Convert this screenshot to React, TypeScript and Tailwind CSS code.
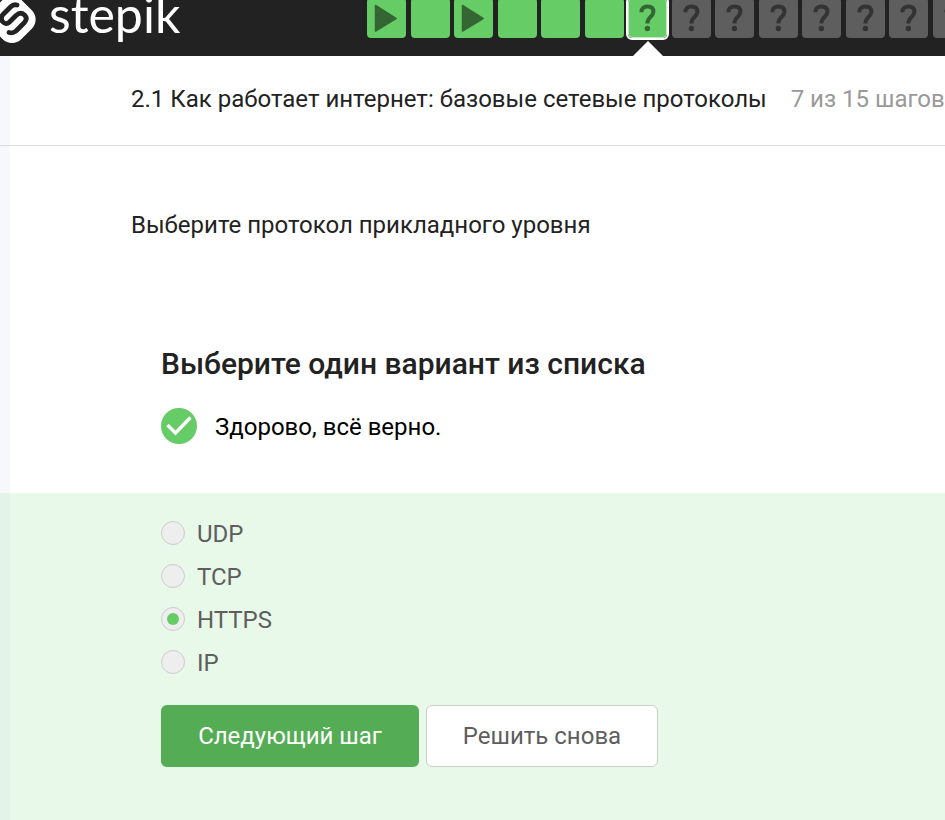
import { useState } from "react";
import type { ReactNode } from "react";

type StepKind = "video" | "text" | "quiz";
type Step = { kind: StepKind; passed: boolean; current?: boolean };

const steps: Step[] = [
  { kind: "video", passed: true },
  { kind: "text", passed: true },
  { kind: "video", passed: true },
  { kind: "text", passed: true },
  { kind: "text", passed: true },
  { kind: "text", passed: true },
  { kind: "quiz", passed: true, current: true },
  ...Array.from({ length: 8 }, (): Step => ({ kind: "quiz", passed: false })),
];

const options = ["UDP", "TCP", "HTTPS", "IP"];

function LogoMark() {
  return (
    <svg width="37" height="44" viewBox="0 0 37 44" className="shrink-0" aria-hidden="true">
      <rect x="-8.5" y="-1" width="41" height="41" rx="13" transform="rotate(45 12 19.5)" fill="#fff" />
      <path
        d="M17 5 Q13.5 4 11 6.5 L3 14.5 Q0 18 2.5 21.5 Q6 25.5 9.5 22 L16 15.5 Q20.5 11.5 24.5 15 Q28 18.5 24.5 22.5 L16 31 Q13 33.5 9 32.5"
        fill="none"
        stroke="#222"
        strokeWidth="4.8"
        strokeLinecap="round"
        strokeLinejoin="round"
      />
    </svg>
  );
}

function StepTile({ step, index }: { step: Step; index: number }) {
  let icon: ReactNode = null;
  if (step.kind === "video") {
    icon = (
      <svg width="24" height="28" viewBox="0 0 24 28" aria-hidden="true">
        <path d="M1.5 1.5 L22 14.5 L1.5 27 Z" fill="#336633" stroke="#336633" strokeWidth="1.5" strokeLinejoin="round" />
      </svg>
    );
  } else if (step.kind === "quiz") {
    icon = (
      <svg width="18" height="28" viewBox="0 0 18 28" aria-hidden="true">
        <path
          d="M3.3 8.2 C3.3 4.5 5.8 2.4 9.4 2.4 C13.2 2.4 15.4 4.4 15.4 7.8 C15.4 10.6 13.8 11.8 12.1 13.4 C10 15.4 9.4 16.4 9.4 19.6"
          fill="none"
          stroke={step.passed ? "#336633" : "#333"}
          strokeWidth="4"
        />
        <circle cx="9.4" cy="24.5" r="2.7" fill={step.passed ? "#336633" : "#333"} />
      </svg>
    );
  }
  return (
    <li className="relative shrink-0 odd:mr-[5px] even:mr-1">
      <a
        href={`#step-${index + 1}`}
        aria-label={`Шаг ${index + 1}`}
        aria-current={step.current ? "step" : undefined}
        className={`flex h-10 w-[39px] items-center justify-center rounded pr-0.5 ${
          step.passed ? "bg-[#66cc66]" : "bg-[#5e5e5e]"
        } ${step.current ? "border border-[#c2ebc2] outline-2 outline-white" : ""}`}
      >
        {icon}
      </a>
      {step.current && (
        <svg width="30" height="15" viewBox="0 0 30 15" className="absolute top-[43px] left-[5px]" aria-hidden="true">
          <path d="M0 15 L15 0 L30 15 Z" fill="#fff" />
        </svg>
      )}
    </li>
  );
}

export default function App() {
  const [answer, setAnswer] = useState("HTTPS");

  return (
    <div className="flex min-h-screen flex-col overflow-x-hidden bg-white font-['Roboto','Noto_Sans',sans-serif] text-2xl text-[#222]">
      <header className="flex h-14 items-start bg-[#222]">
        <a href="#home" className="flex w-[367px] shrink-0 items-start text-white">
          <LogoMark />
          <span className="ml-3 -mt-3 font-['Lato',sans-serif] text-[50px] leading-[52px]">stepik</span>
        </a>
        <nav aria-label="Шаги урока" className="-mt-0.5 min-w-0 flex-1">
          <ol className="flex">
            {steps.map((step, i) => (
              <StepTile key={i} step={step} index={i} />
            ))}
          </ol>
        </nav>
      </header>

      <div className="grid flex-1 grid-cols-1">
        <main className="col-start-1 row-start-1 flex min-w-0 flex-col">
          <div className="flex h-[90px] items-center gap-6 border-b border-[#ddd] pb-1 pl-[131px] whitespace-nowrap">
            <h1>2.1 Как работает интернет: базовые сетевые протоколы</h1>
            <span className="text-[#999]">7 из 15 шагов</span>
          </div>

          <p className="mt-[61px] pl-[131px] leading-9">Выберите протокол прикладного уровня</p>

          <form className="mt-[99px] flex flex-1 flex-col" onSubmit={(e) => e.preventDefault()}>
            <div className="pb-[49px] pl-[161px]">
              <h2 id="question" className="text-[30px] leading-11 font-medium">
                Выберите один вариант из списка
              </h2>
              <div className="mt-[22px] flex items-center gap-[18px] text-black">
                <svg width="36" height="36" viewBox="0 0 36 36" aria-hidden="true">
                  <circle cx="18" cy="18" r="18" fill="#66cc66" />
                  <path d="M6.5 17 L14.5 25 L29.5 9.5" fill="none" stroke="#fff" strokeWidth="3.4" />
                </svg>
                <p role="status" className="pt-0.5">
                  Здорово, всё верно.
                </p>
              </div>
            </div>

            <div className="flex-1 bg-[#e8f8e9] pt-[18px] pb-[53px] pl-[161px]">
              <div role="radiogroup" aria-labelledby="question" className="flex flex-col items-start text-[#5e5e5e]">
                {options.map((option) => (
                  <label key={option} className="flex h-[43px] items-center gap-3">
                    <input
                      type="radio"
                      name="answer"
                      value={option}
                      checked={answer === option}
                      onChange={() => setAnswer(option)}
                      className="grid size-6 appearance-none place-items-center rounded-full border border-[#ccc] bg-[#eee] before:size-3 before:rounded-full checked:before:bg-[#66cc66]"
                    />
                    <span className="pt-0.5">{option}</span>
                  </label>
                ))}
              </div>
              <div className="mt-[22px] flex gap-[7px]">
                <button type="submit" className="h-[62px] w-[258px] rounded-md bg-[#54ad54] text-white">
                  Следующий шаг
                </button>
                <button type="button" className="h-[62px] w-[232px] rounded-md border border-[#ccc] bg-white text-[#5e5e5e]">
                  Решить снова
                </button>
              </div>
            </div>
          </form>
        </main>
        <div className="pointer-events-none col-start-1 row-start-1 w-2.5 bg-[#d7dceb]/20" />
      </div>
    </div>
  );
}
